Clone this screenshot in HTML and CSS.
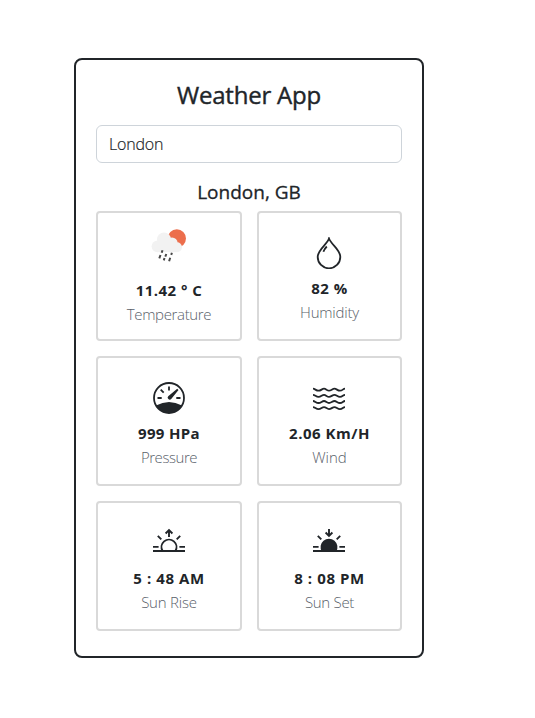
FILE: index.html
```html
<!DOCTYPE html>
<html lang="en">
<head>
<meta charset="utf-8">
<title>Weather App</title>
<link rel="stylesheet" href="styles.css">
</head>
<body>
<main class="app">
  <h1 class="title">Weather App</h1>
  <input class="search" type="text" value="London" aria-label="City">
  <h2 class="city">London, GB</h2>
  <section class="grid">
    <article class="card card-temp">
      <div class="icon">
        <svg width="50" height="50" viewBox="0 0 50 50">
          <circle cx="32.800" cy="17.500" r="9.200" fill="#ec6e4c"/>
          <g fill="#f2f2f2">
            <circle cx="13.500" cy="25.300" r="5.900"/>
            <circle cx="20" cy="18.500" r="7"/>
            <circle cx="28" cy="22" r="5.600"/>
            <circle cx="33" cy="26.200" r="5"/>
            <path d="M13.500 22h19v9.200h-19z"/>
          </g>
          <path d="M18.500 29.300l-.8 2.400M16.500 34l-1.200 3.300M22.300 33l-1 2.600M20.500 37l-.7 2.400M27.900 31.700l-.7 2.200M26.200 36.800l-1.100 3.400" stroke="#484848" stroke-width="2"/>
        </svg>
      </div>
      <div class="value v-temp">11.42 ° C</div>
      <div class="label l-temp">Temperature</div>
    </article>
    <article class="card">
      <div class="icon">
        <svg width="32" height="32" viewBox="0 0 32 32" fill="none" stroke="currentColor" stroke-width="1.800">
          <path d="M16 1.500C14.500 7 4.700 12.500 4.700 20a11.300 11.300 0 0 0 22.600 0C27.300 12.500 18.500 8 16 1.500z"/>
          <path d="M13.800 9.500Q11.300 12 10.400 14.800"/>
        </svg>
      </div>
      <div class="value v-hum">82 %</div>
      <div class="label l-hum">Humidity</div>
    </article>
    <article class="card">
      <div class="icon">
        <svg width="32" height="32" viewBox="0 0 32 32" fill="none" stroke="currentColor" stroke-width="1.800">
          <circle cx="16" cy="16" r="15"/>
          <path d="M3 23.500Q16 16.500 29 23.500A15 15 0 0 1 3 23.500z" fill="currentColor" stroke="none"/>
          <path d="M16 4.500v4M7.700 7.700l3 3M4.500 16h4.200M23.300 16h4.200"/>
          <path d="M24.200 6.700l1.300 1.200-7.300 9a2 2 0 1 1-3-2.700z" fill="currentColor" stroke="none"/>
        </svg>
      </div>
      <div class="value v-pres">999 HPa</div>
      <div class="label l-pres">Pressure</div>
    </article>
    <article class="card">
      <div class="icon">
        <svg width="32" height="32" viewBox="0 0 32 32" fill="none" stroke="currentColor" stroke-width="1.800">
          <path d="M0 6.700c2 0 3 2 5.500 2s3.500-2 5.500-2 3 2 5 2 3.500-2 5.500-2 3 2 5.500 2 3-2 5-2"/>
          <path d="M0 12.900c2 0 3 2 5.500 2s3.500-2 5.500-2 3 2 5 2 3.500-2 5.500-2 3 2 5.500 2 3-2 5-2"/>
          <path d="M0 19c2 0 3 2 5.500 2s3.500-2 5.500-2 3 2 5 2 3.500-2 5.500-2 3 2 5.500 2 3-2 5-2"/>
          <path d="M0 25.100c2 0 3 2 5.500 2s3.500-2 5.500-2 3 2 5 2 3.500-2 5.500-2 3 2 5.500 2 3-2 5-2"/>
        </svg>
      </div>
      <div class="value v-wind">2.06 Km/H</div>
      <div class="label l-wind">Wind</div>
    </article>
    <article class="card">
      <div class="icon">
        <svg width="32" height="32" viewBox="0 0 32 32" fill="none" stroke="currentColor" stroke-width="1.900">
          <path d="M0 24h32M0 19.900h5.600M26.400 19.900H32M4.800 8.800l3.500 3.500M27.200 8.800l-3.500 3.500M16 10V3.500M12.600 6.500L16 3.100l3.400 3.400"/>
          <path d="M9.600 24a7.500 7.500 0 1 1 12.800 0"/>
        </svg>
      </div>
      <div class="value v-rise">5 : 48 AM</div>
      <div class="label l-rise">Sun Rise</div>
    </article>
    <article class="card">
      <div class="icon">
        <svg width="32" height="32" viewBox="0 0 32 32" fill="none" stroke="currentColor" stroke-width="1.900">
          <path d="M0 24h32M0 19.900h5.600M26.400 19.900H32M4.800 8.800l3.500 3.500M27.200 8.800l-3.500 3.500M16 2v6.500M12.600 5.500L16 8.900l3.400-3.400"/>
          <path d="M9.600 24a7.500 7.500 0 1 1 12.800 0z" fill="currentColor"/>
        </svg>
      </div>
      <div class="value v-set">8 : 08 PM</div>
      <div class="label l-set">Sun Set</div>
    </article>
  </section>
</main>
</body>
</html>
```

FILE: styles.css
```css
* { box-sizing: border-box; }

body {
  margin: 0;
  padding: 58px 0 0 74px;
  background: #fff;
  color: #212529;
  font-family: "Open Sans", "Noto Sans", sans-serif;
  font-size: 16px;
  line-height: 24px;
}

.app {
  width: 350px;
  height: 600px;
  padding: 20px;
  border: 2px solid #212529;
  border-radius: 8px;
  text-align: center;
}

.title {
  margin: 0 0 16px;
  font-size: 24px;
  font-weight: 500;
  line-height: 30px;
  height: 29px;
  letter-spacing: -0.2px;
  -webkit-text-stroke: 0.4px currentColor;
}

.search {
  display: block;
  width: 306px;
  height: 38px;
  margin: 0 0 17px;
  padding: 6px 12px;
  border: 1px solid #ced4da;
  border-radius: 6px;
  background: #fff;
  color: #212529;
  font: 300 16px/24px "Open Sans", "Noto Sans", sans-serif;
  letter-spacing: -0.2px;
  -webkit-text-stroke: 0.2px currentColor;
}

.city {
  margin: 0 0 7px;
  font-size: 19px;
  font-weight: 500;
  line-height: 24px;
  -webkit-text-stroke: 0.3px currentColor;
}

.grid {
  display: grid;
  grid-template-columns: 146px 145px;
  grid-auto-rows: 130px;
  gap: 15px;
}

.card {
  border: 2px solid #d9d9d9;
  border-radius: 4px;
}

.icon {
  display: flex;
  align-items: flex-end;
  justify-content: center;
  height: 63px;
  padding-bottom: 7px;
}

.card:nth-child(even) .icon { padding-right: 1px; }

.card-temp .icon {
  height: 65px;
}

.icon svg { display: block; flex: none; }

.value { font-size: 15px; font-weight: 700; white-space: nowrap; }

.label {
  font-size: 15px;
  font-weight: 300;
  line-height: 25px;
  color: #59616a;
  white-space: nowrap;
}

.v-temp { letter-spacing: 0.450px; }
.v-hum { letter-spacing: 0.500px; }
.v-pres { letter-spacing: 0.350px; }
.v-wind { letter-spacing: 0.500px; }
.v-rise { letter-spacing: 0.600px; }
.v-set { letter-spacing: 0.600px; }

.l-temp { letter-spacing: -0.350px; }
.l-hum { letter-spacing: -0.200px; }
.l-pres { letter-spacing: -0.450px; }
.l-rise { letter-spacing: -0.200px; }
.l-set { letter-spacing: -0.300px; }
```
